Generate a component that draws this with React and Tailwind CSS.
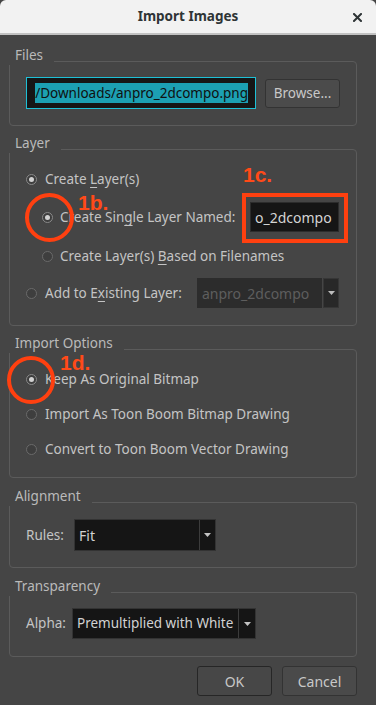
import React from "react";

function Radio({ checked }) {
  return (
    <span
      className={`w-[11px] h-[11px] rounded-full border shrink-0 flex items-center justify-center ${
        checked ? "border-[#8a8a8a] bg-[#3e3e3e]" : "border-[#6a6a6a] bg-[#3e3e3e]"
      }`}
    >
      {checked && <span className="w-[5px] h-[5px] rounded-full bg-[#d2d2d2]" />}
    </span>
  );
}

function Group({ title, className, children }) {
  return (
    <div className={`ml-[9px] w-[348px] border border-[#5b5b5b] rounded-[4px] flex flex-col ${className}`}>
      <div className="-mt-[17px] -ml-[1px] self-start bg-[#454545] pl-[6px] pr-[11px] h-[20px] leading-[20px] text-[#bababa]">
        {title}
      </div>
      {children}
    </div>
  );
}

function Arrow({ color = "#c4c4c4" }) {
  return (
    <svg width="7" height="4" viewBox="0 0 7 4">
      <path d="M0 0 L7 0 L3.5 4 Z" fill={color} />
    </svg>
  );
}

function U({ children }) {
  return <span className="underline underline-offset-[3px] decoration-[1px]">{children}</span>;
}

export default function App() {
  return (
    <div className="relative w-[376px] h-[705px] bg-[#454545] flex flex-col overflow-hidden font-['Noto_Sans',sans-serif] text-[13.5px] text-[#c4c4c4]">
      {/* Title bar */}
      <div className="h-[35px] shrink-0 bg-[#f2f2f2] border-b-[2px] border-[#c2c2c2] rounded-t-[6px] flex items-center justify-center relative">
        <span className="font-bold text-[13.5px] text-[#2e3436] leading-none">Import Images</span>
        <svg className="absolute right-[14px] top-[13px]" width="9" height="9" viewBox="0 0 9 9">
          <path d="M1 1 L8 8 M8 1 L1 8" stroke="#2e3436" strokeWidth="2" strokeLinecap="square" />
        </svg>
      </div>

      {/* Files */}
      <Group title="Files" className="mt-[26px] h-[65px] shrink-0">
        <div className="mt-[12px] ml-[16px] flex items-center">
          <div className="w-[230px] h-[32px] border border-[#1ec0d6] bg-[#161616] flex items-center justify-end overflow-hidden pr-[7px]">
            <span className="bg-[#1ca0b3] text-[#101010] h-[20px] leading-[20px] text-[13.5px] whitespace-nowrap">
              /Downloads/anpro_2dcompo.png
            </span>
          </div>
          <div className="ml-[9px] w-[75px] h-[29px] rounded-[3px] border border-[#333333] bg-[#4b4b4b] flex items-center justify-center text-[#c8c8c8]">
            Browse...
          </div>
        </div>
      </Group>

      {/* Layer */}
      <Group title="Layer" className="mt-[23px] h-[177px] shrink-0">
        <div className="mt-[14px] h-[24px] ml-[16px] flex items-center gap-[8px]">
          <Radio checked />
          <span>
            Create <U>L</U>ayer(s)
          </span>
        </div>
        <div className="mt-[11px] h-[30px] ml-[32px] flex items-center gap-[7px]">
          <Radio checked />
          <span>
            Create Sin<U>g</U>le Layer Named:
          </span>
          <div className="ml-auto mr-[17px] w-[89px] h-[30px] border border-[#2c2c2c] bg-[#151515] flex items-center pl-[4px] overflow-hidden text-[#d4d4d4] text-[14px] whitespace-nowrap">
            o_2dcompo
          </div>
        </div>
        <div className="mt-[12px] h-[24px] ml-[32px] flex items-center gap-[7px]">
          <Radio />
          <span>
            Create Layer(s) <U>B</U>ased on Filenames
          </span>
        </div>
        <div className="mt-[10px] h-[30px] ml-[16px] flex items-center gap-[8px]">
          <Radio />
          <span>
            Add to E<U>x</U>isting Layer:
          </span>
          <div className="ml-auto mr-[17px] w-[142px] h-[30px] flex">
            <div className="flex-1 bg-[#2c2c2c] flex items-center pl-[5px] text-[#5e5e5e] text-[14px]">anpro_2dcompo</div>
            <div className="w-[16px] ml-[1px] bg-[#282828] border border-[#363636] flex items-center justify-center">
              <Arrow color="#bdbdbd" />
            </div>
          </div>
        </div>
      </Group>

      {/* Import Options */}
      <Group title="Import Options" className="mt-[23px] h-[129px] shrink-0">
        <div className="mt-[14px] h-[24px] ml-[16px] flex items-center gap-[8px]">
          <Radio checked />
          <span>Keep As Original Bitmap</span>
        </div>
        <div className="mt-[11px] h-[24px] ml-[16px] flex items-center gap-[8px]">
          <Radio />
          <span>Import As Toon Boom Bitmap Drawing</span>
        </div>
        <div className="mt-[11px] h-[24px] ml-[16px] flex items-center gap-[8px]">
          <Radio />
          <span>Convert to Toon Boom Vector Drawing</span>
        </div>
      </Group>

      {/* Alignment */}
      <Group title="Alignment" className="mt-[24px] h-[66px] shrink-0">
        <div className="mt-[13px] ml-[16px] flex items-center">
          <span className="w-[48px]">Rules:</span>
          <div className="w-[142px] h-[32px] border border-[#333333] bg-[#151515] flex">
            <div className="flex-1 flex items-center pl-[4px] text-[#d2d2d2] text-[14px]">Fit</div>
            <div className="w-[16px] border-l border-[#3c3c3c] flex items-center justify-center">
              <Arrow />
            </div>
          </div>
        </div>
      </Group>

      {/* Transparency */}
      <Group title="Transparency" className="mt-[24px] h-[65px] shrink-0">
        <div className="mt-[12px] ml-[16px] flex items-center">
          <span className="w-[46px]">Alpha:</span>
          <div className="w-[184px] h-[31px] border border-[#333333] bg-[#151515] flex">
            <div className="flex-1 flex items-center pl-[4px] text-[#d2d2d2] text-[13.5px] whitespace-nowrap overflow-hidden">
              Premultiplied with White
            </div>
            <div className="w-[17px] border-l border-[#3c3c3c] flex items-center justify-center">
              <Arrow />
            </div>
          </div>
        </div>
      </Group>

      {/* Buttons */}
      <div className="mt-[9px] mr-[19px] flex justify-end gap-[10px]">
        <div className="w-[75px] h-[30px] rounded-[3px] border border-[#262626] bg-[#474747] flex items-center justify-center text-[#c8c8c8] text-[14px]">
          OK
        </div>
        <div className="w-[75px] h-[30px] rounded-[3px] border border-[#333333] bg-[#4a4a4a] flex items-center justify-center text-[#c8c8c8] text-[14px]">
          Cancel
        </div>
      </div>

      {/* Annotations */}
      <div className="absolute left-[25px] top-[193px] w-[49px] h-[49px] rounded-full border-[4px] border-[#ff4010]" />
      <div className="absolute left-[7px] top-[356px] w-[48px] h-[48px] rounded-full border-[4px] border-[#ff4010]" />
      <div className="absolute left-[242px] top-[193px] w-[106px] h-[50px] border-[4px] border-[#ff4010]" />
      <span className="absolute left-[78px] top-[192px] font-['Liberation_Sans',sans-serif] font-bold text-[21px] leading-none text-[#ff4a18]">1b.</span>
      <span className="absolute left-[243px] top-[164px] font-['Liberation_Sans',sans-serif] font-bold text-[21px] leading-none text-[#ff4a18]">1c.</span>
      <span className="absolute left-[60px] top-[352px] font-['Liberation_Sans',sans-serif] font-bold text-[21px] leading-none text-[#ff4a18]">1d.</span>
    </div>
  );
}
